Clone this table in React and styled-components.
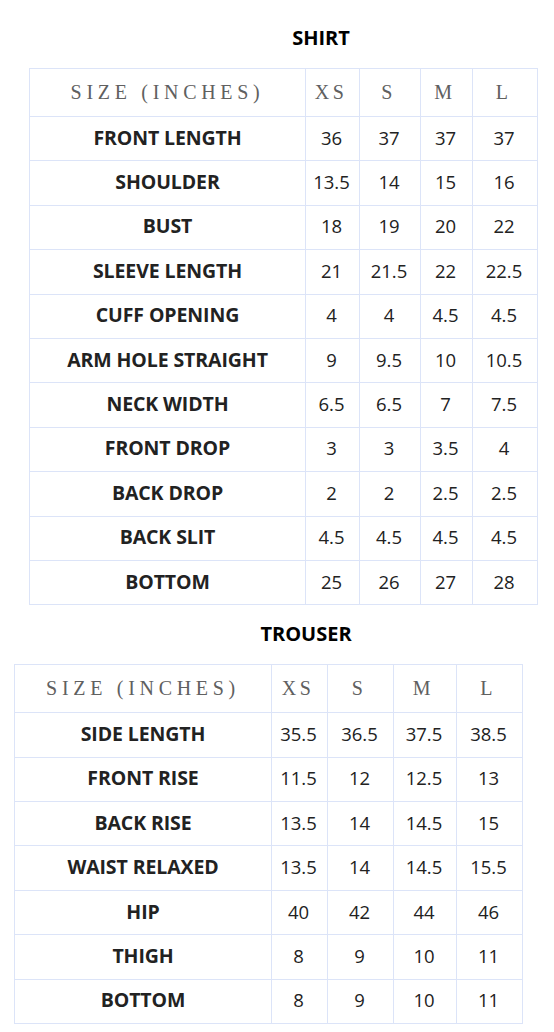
import React from "react";
import styled, { createGlobalStyle } from "styled-components";

const GlobalStyle = createGlobalStyle`
  html, body { margin: 0; padding: 0; background: #fff; }
  body { font-family: "Open Sans", sans-serif; }
`;

const Page = styled.div`
  width: 554px;
  padding-top: 26px;
  padding-bottom: 8px;
`;

const Section = styled.section`
  width: 508px;
  margin-left: ${(p) => p.$left}px;
  margin-bottom: 17px;
`;

const Title = styled.h2`
  margin: 0 0 18px 0;
  padding-left: 76px;
  text-align: center;
  font-family: "Open Sans", sans-serif;
  font-weight: 700;
  font-size: 20px;
  line-height: 24px;
  color: #000;
`;

const Table = styled.table`
  width: 508px;
  border-collapse: collapse;
  table-layout: fixed;
  border: 1px solid #dce4f8;
`;

const HeadCell = styled.th`
  height: 46px;
  padding: 0 ${(p) => (p.$wide ? "0" : "3px")} 1px 0;
  border: 1px solid #dce4f8;
  font-family: "Liberation Serif", serif;
  font-weight: 400;
  font-size: 20px;
  letter-spacing: ${(p) => (p.$wide ? "4.7px" : "3.5px")};
  color: #606060;
  text-align: center;
  vertical-align: middle;
`;

const LabelCell = styled.td`
  height: 40.4px;
  padding: 0 0 3px 0;
  border: 1px solid #dce4f8;
  font-family: "Open Sans", sans-serif;
  font-weight: 700;
  font-size: 19.5px;
  letter-spacing: -0.1px;
  color: #222;
  text-align: center;
  vertical-align: middle;
`;

const ValueCell = styled.td`
  padding: 0 2px 3px 0;
  border: 1px solid #dce4f8;
  font-family: "Open Sans", sans-serif;
  font-weight: 400;
  font-size: 18.5px;
  color: #222;
  text-align: center;
  vertical-align: middle;
`;

const shirt = {
  left: 29,
  cols: [276, 54, 61, 52, 65],
  rows: [
    ["FRONT LENGTH", "36", "37", "37", "37"],
    ["SHOULDER", "13.5", "14", "15", "16"],
    ["BUST", "18", "19", "20", "22"],
    ["SLEEVE LENGTH", "21", "21.5", "22", "22.5"],
    ["CUFF OPENING", "4", "4", "4.5", "4.5"],
    ["ARM HOLE STRAIGHT", "9", "9.5", "10", "10.5"],
    ["NECK WIDTH", "6.5", "6.5", "7", "7.5"],
    ["FRONT DROP", "3", "3", "3.5", "4"],
    ["BACK DROP", "2", "2", "2.5", "2.5"],
    ["BACK SLIT", "4.5", "4.5", "4.5", "4.5"],
    ["BOTTOM", "25", "26", "27", "28"],
  ],
};

const trouser = {
  left: 14,
  cols: [257, 56, 66, 63, 66],
  rows: [
    ["SIDE LENGTH", "35.5", "36.5", "37.5", "38.5"],
    ["FRONT RISE", "11.5", "12", "12.5", "13"],
    ["BACK RISE", "13.5", "14", "14.5", "15"],
    ["WAIST RELAXED", "13.5", "14", "14.5", "15.5"],
    ["HIP", "40", "42", "44", "46"],
    ["THIGH", "8", "9", "10", "11"],
    ["BOTTOM", "8", "9", "10", "11"],
  ],
};

function SizeTable({ title, data }) {
  return (
    <Section $left={data.left}>
      <Title>{title}</Title>
      <Table>
        <colgroup>
          {data.cols.map((w, i) => (
            <col key={i} style={{ width: w }} />
          ))}
        </colgroup>
        <thead>
          <tr>
            <HeadCell $wide>SIZE (INCHES)</HeadCell>
            <HeadCell>XS</HeadCell>
            <HeadCell>S</HeadCell>
            <HeadCell>M</HeadCell>
            <HeadCell>L</HeadCell>
          </tr>
        </thead>
        <tbody>
          {data.rows.map((r) => (
            <tr key={r[0]}>
              <LabelCell>{r[0]}</LabelCell>
              {r.slice(1).map((v, i) => (
                <ValueCell key={i}>{v}</ValueCell>
              ))}
            </tr>
          ))}
        </tbody>
      </Table>
    </Section>
  );
}

export default function App() {
  return (
    <>
      <GlobalStyle />
      <Page>
        <SizeTable title="SHIRT" data={shirt} />
        <SizeTable title="TROUSER" data={trouser} />
      </Page>
    </>
  );
}
